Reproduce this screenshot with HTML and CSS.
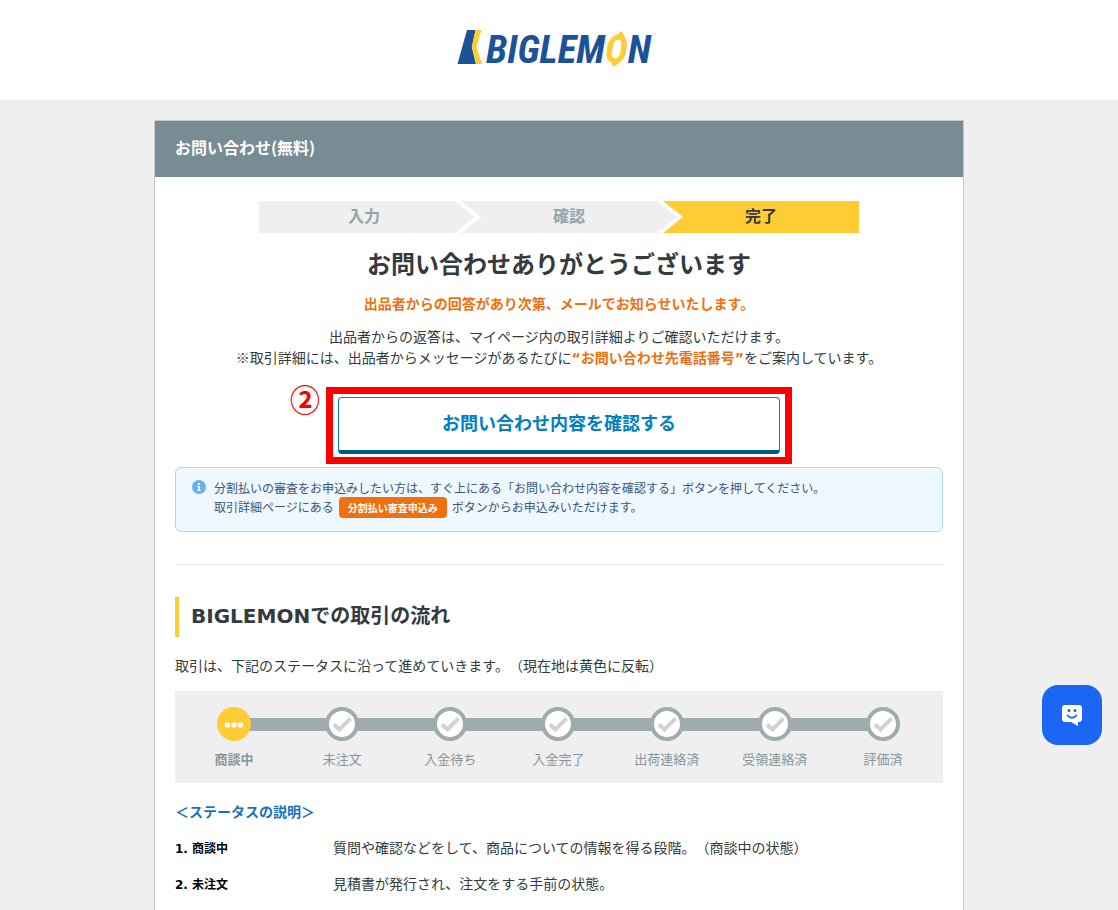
FILE: index.html
```html
<!DOCTYPE html>
<html lang="ja">
<head>
<meta charset="utf-8">
<meta name="viewport" content="width=device-width, initial-scale=1">
<title>お問い合わせ(無料) | BIGLEMON</title>
<link rel="stylesheet" href="styles.css">
</head>
<body>
<header class="site-header">
  <svg class="logo" viewBox="0 0 204 42" width="204" height="42" role="img" aria-label="BIGLEMON">
    <path class="logo-blue" d="M10 4H18.500L15 21L19 38H0.500Z"/>
    <path class="logo-yellow" d="M18.500 4H24.500L19.500 21L25 38H19L14.700 21Z"/>
    <text class="logo-text" x="29" y="37">BIGLEM<tspan class="logo-yellow">O</tspan>N</text>
    <path class="logo-yellow" d="M157 11L164.500 5L168 11ZM153.500 35.500L156.500 41L164 35.500Z"/>
  </svg>
</header>
<main class="card">
  <h1 class="card-title">お問い合わせ(無料)</h1>
  <div class="card-body">
    <ol class="steps">
      <li class="step step-first">入力</li>
      <li class="step step-middle">確認</li>
      <li class="step step-last" aria-current="step">完了</li>
    </ol>
    <h2 class="thanks">お問い合わせありがとうございます</h2>
    <p class="notice">出品者からの回答があり次第、メールでお知らせいたします。</p>
    <p class="lead">出品者からの返答は、マイページ内の取引詳細よりご確認いただけます。<br>※取引詳細には、出品者からメッセージがあるたびに<strong class="accent"><span class="latin">“</span>お問い合わせ先電話番号<span class="latin">”</span></strong>をご案内しています。</p>
    <div class="action">
      <button class="confirm" type="button">お問い合わせ内容を確認する</button>
      <span class="frame"></span>
      <span class="marker">②</span>
    </div>
    <div class="info">
      <svg class="info-icon" viewBox="0 0 14 14" width="14" height="14" aria-hidden="true">
        <circle cx="7" cy="7" r="7" fill="#63b3f4"/>
        <path d="M6 3h2v2H6zM5 6h3v4h1v1H5v-1h1V7H5z" fill="#fff"/>
      </svg>
      <p class="info-text">分割払いの審査をお申込みしたい方は、すぐ上にある「お問い合わせ内容を確認する」ボタンを押してください。<br>取引詳細ページにある<span class="pill">分割払い審査申込み</span>ボタンからお申込みいただけます。</p>
    </div>
    <hr class="divider">
    <h2 class="section-title"><span class="latin">BIGLEMON</span>での取引の流れ</h2>
    <p class="flow-text">取引は、下記のステータスに沿って進めていきます。（現在地は黄色に反転）</p>
    <ol class="flow">
      <li class="stage current"><svg class="dot" viewBox="0 0 34 34" width="34" height="34" aria-hidden="true"><circle cx="17" cy="17" r="17" fill="#ffcc33"/><g fill="#fff"><circle cx="10.500" cy="18" r="2.800"/><circle cx="17" cy="18" r="2.800"/><circle cx="23.500" cy="18" r="2.800"/></g></svg>商談中</li>
      <li class="stage"><svg class="dot" viewBox="0 0 34 34" width="34" height="34" aria-hidden="true"><use href="#check"/></svg>未注文</li>
      <li class="stage"><svg class="dot" viewBox="0 0 34 34" width="34" height="34" aria-hidden="true"><use href="#check"/></svg>入金待ち</li>
      <li class="stage"><svg class="dot" viewBox="0 0 34 34" width="34" height="34" aria-hidden="true"><use href="#check"/></svg>入金完了</li>
      <li class="stage"><svg class="dot" viewBox="0 0 34 34" width="34" height="34" aria-hidden="true"><use href="#check"/></svg>出荷連絡済</li>
      <li class="stage"><svg class="dot" viewBox="0 0 34 34" width="34" height="34" aria-hidden="true"><use href="#check"/></svg>受領連絡済</li>
      <li class="stage"><svg class="dot" viewBox="0 0 34 34" width="34" height="34" aria-hidden="true"><g id="check"><circle cx="17" cy="17" r="15" fill="#fff" stroke="#a0abac" stroke-width="4"/><path d="M9 17.500L14.500 22.500L25.500 11.500" fill="none" stroke="#d2d2d2" stroke-width="4"/></g></svg>評価済</li>
    </ol>
    <h3 class="status-title">＜ステータスの説明＞</h3>
    <dl class="status-list">
      <dt><span class="latin">1. </span>商談中</dt>
      <dd>質問や確認などをして、商品についての情報を得る段階。（商談中の状態）</dd>
      <dt><span class="latin">2. </span>未注文</dt>
      <dd>見積書が発行され、注文をする手前の状態。</dd>
    </dl>
  </div>
</main>
<button class="chat" type="button" aria-label="チャット">
  <svg viewBox="0 0 20 21" width="20" height="21" aria-hidden="true">
    <path d="M3 0H17Q20 0 20 3V14Q20 17 17 17H16V21L9 17H3Q0 17 0 14V3Q0 0 3 0Z" fill="#fff"/>
    <circle cx="7" cy="5.500" r="1.500" fill="#1b66f5"/><circle cx="13" cy="5.500" r="1.500" fill="#1b66f5"/>
    <path d="M5 10Q10 15.500 15 10" fill="none" stroke="#1b66f5" stroke-width="1.800"/>
  </svg>
</button>
</body>
</html>
```
FILE: styles.css
```css
* { box-sizing: border-box; }

body {
  margin: 0;
  background: #efefef;
  color: #333b3e;
  font: 14px/21px "Noto Sans CJK JP", sans-serif;
  text-spacing-trim: space-all;
}

h1, h2, h3, p, ol, dl, dd { margin: 0; padding: 0; }
ol { list-style: none; }
button { font-family: inherit; cursor: pointer; }

.latin {
  font-family: "DejaVu Sans", sans-serif;
  line-height: 1;
}

.site-header {
  display: flex;
  justify-content: center;
  height: 100px;
  padding-top: 26px;
  background: #fff;
}
.logo { overflow: visible; }
.logo-blue { fill: #1c5299; }
.logo-yellow { fill: #ffcc33; }
.logo-text {
  fill: #1c5299;
  font: italic bold 39px "Roboto Condensed", "Liberation Sans Narrow", sans-serif;
}

.card {
  max-width: 810px;
  margin: 20px auto 0;
  border: 1px solid #c8c8c8;
  background: #fff;
}
.card-title {
  padding: 14px 20px 18px;
  background: #788c94;
  color: #fff;
  font-size: 16px;
  line-height: 24px;
}
.card-body { padding: 24px 20px; }

.steps {
  display: grid;
  grid-template-columns: repeat(3, 1fr);
  gap: 6px;
  max-width: 600px;
  margin: 0 auto;
}
.step {
  margin-right: -20px;
  padding-bottom: 4px;
  background: #efefef;
  color: #96a3a8;
  font-size: 16px;
  font-weight: bold;
  line-height: 28px;
  text-align: center;
}
.step-first {
  padding-right: 6px;
  clip-path: polygon(0 0, calc(100% - 20px) 0, 100% 50%, calc(100% - 20px) 100%, 0 100%);
}
.step-middle {
  clip-path: polygon(0 0, calc(100% - 20px) 0, 100% 50%, calc(100% - 20px) 100%, 0 100%, 20px 50%);
}
.step-last {
  margin-right: 0;
  background: #ffcc33;
  color: #333b3e;
  clip-path: polygon(0 0, 100% 0, 100% 100%, 0 100%, 20px 50%);
}

.thanks {
  margin-top: 12px;
  font-size: 24px;
  line-height: 36px;
  text-align: center;
}
.notice {
  margin-top: 12px;
  color: #f07010;
  font-weight: bold;
  text-align: center;
}
.lead {
  margin-top: 12px;
  text-align: center;
}
.accent { color: #f07010; }

.action {
  position: relative;
  max-width: 442px;
  margin: 29px auto 13px;
}
.confirm {
  display: block;
  width: 100%;
  padding: 11px 0 15px;
  border: 1px solid #0080c0;
  border-bottom: 4px solid #005888;
  border-radius: 4px;
  background: #fff;
  color: #0080c0;
  font-size: 18px;
  font-weight: bold;
  line-height: 26px;
}
.frame {
  position: absolute;
  inset: -10px -12px;
  border: 7px solid #f00;
  pointer-events: none;
}
.marker {
  position: absolute;
  top: -17px;
  left: -48px;
  color: #f00;
  font-size: 30px;
  font-weight: bold;
  line-height: 36px;
}

.info {
  display: flex;
  gap: 8px;
  padding: 10px 16px 15px;
  border: 1px solid #b0d8fa;
  border-radius: 6px;
  background: #eff7ff;
  color: #38567c;
  font-size: 12px;
  line-height: 19px;
}
.info-icon {
  flex: none;
  margin-top: 2px;
}
.pill {
  margin: 0 5px;
  padding: 3px 9px;
  border-radius: 4px;
  background: #f07010;
  color: #fff;
  font-size: 10px;
  font-weight: bold;
  line-height: 1;
}

.divider {
  margin: 32px 0;
  border: 0;
  border-top: 1px solid #e8e8e8;
}
.section-title {
  padding: 0 0 4px 12px;
  border-left: 4px solid #ffcc33;
  font-size: 20px;
  line-height: 36px;
}
.flow-text { margin-top: 18px; }

.flow {
  display: grid;
  grid-template-columns: repeat(7, 1fr);
  margin-top: 15px;
  padding: 16px 6px 14px 5px;
  background: #efefef;
  color: #87959a;
  font-size: 13px;
  line-height: 20px;
  text-align: center;
}
.stage {
  display: flex;
  flex-direction: column;
  align-items: center;
  gap: 8px;
  background: linear-gradient(#a0abb0, #a0abb0) no-repeat 0 11px / 100% 13px;
}
.stage:first-child { background-position: 100% 11px; background-size: 50% 13px; }
.stage:last-child { background-size: 50% 13px; }
.current { font-weight: bold; }
.dot { display: block; }

.status-title {
  margin-top: 18px;
  color: #1c70c0;
  font-size: 14px;
  line-height: 21px;
}
.status-list {
  display: grid;
  grid-template-columns: 158px 1fr;
  row-gap: 15px;
  margin-top: 15px;
}
.status-list dt {
  color: #000;
  font-size: 12px;
  font-weight: bold;
}

.chat {
  position: fixed;
  top: 685px;
  right: 16px;
  display: flex;
  align-items: center;
  justify-content: center;
  width: 60px;
  height: 60px;
  padding: 0;
  border: 0;
  border-radius: 16px;
  background: #1b66f5;
}
```
